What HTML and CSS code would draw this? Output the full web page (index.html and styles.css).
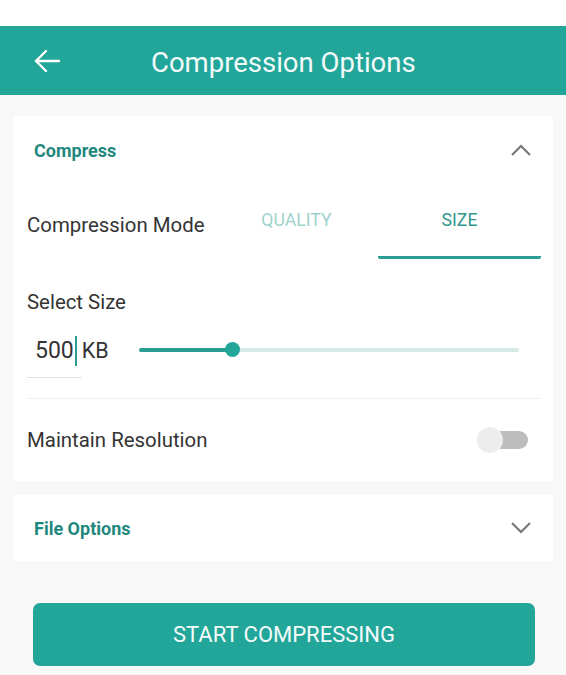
FILE: index.html
```html
<!DOCTYPE html>
<html>
<head>
<meta charset="utf-8">
<link rel="stylesheet" href="styles.css">
</head>
<body>
<div class="status"></div>
<header class="appbar">
  <svg class="back" width="28" height="24" viewBox="0 0 28 24"><path d="M26 12H3M13 2L3 12l10 10" fill="none" stroke="#fff" stroke-width="2.4" stroke-linecap="round" stroke-linejoin="round"/></svg>
  <h1 class="title">Compression Options</h1>
</header>
<main class="content">
  <section class="card">
    <div class="card-head">
      <span class="card-title">Compress</span>
      <svg class="chev" width="22" height="14" viewBox="0 0 22 14"><path d="M2 12L11 3l9 9" fill="none" stroke="#757575" stroke-width="2"/></svg>
    </div>
    <div class="mode-row">
      <span class="label mode-label">Compression Mode</span>
      <div class="tabs">
        <div class="tab">QUALITY</div>
        <div class="tab active">SIZE</div>
      </div>
    </div>
    <div class="label size-label">Select Size</div>
    <div class="size-row">
      <div class="size-input"><span class="num">500</span><span class="caret"></span><span class="unit">KB</span></div>
      <div class="slider">
        <div class="track"><div class="fill" style="width:24.5%"></div></div>
        <div class="thumb" style="left:24.5%"></div>
      </div>
    </div>
    <div class="divider"></div>
    <div class="res-row">
      <span class="label">Maintain Resolution</span>
      <div class="switch"><div class="switch-track"></div><div class="switch-thumb"></div></div>
    </div>
  </section>
  <section class="card card2">
    <div class="card-head">
      <span class="card-title">File Options</span>
      <svg class="chev" width="22" height="14" viewBox="0 0 22 14"><path d="M2 2l9 9 9-9" fill="none" stroke="#757575" stroke-width="2"/></svg>
    </div>
  </section>
  <button class="start">START COMPRESSING</button>
</main>
</body>
</html>
```
FILE: styles.css
```css
html, body { margin: 0; padding: 0; }
body {
  font-family: Roboto, "Liberation Sans", sans-serif;
  background: #f8f8f8;
  width: 566px;
  height: 675px;
  overflow: hidden;
}
.status { height: 26px; background: #fff; }
.appbar {
  height: 69px;
  background: #23a69a;
  display: flex;
  align-items: center;
  padding-left: 33px;
  box-sizing: border-box;
}
.back { display: block; margin-top: 0; }
.title {
  margin: 3px 0 0 90px;
  font-weight: 400;
  font-size: 27.5px;
  color: #f2fbfa;
}
.content { padding: 21px 13px 0 13px; }
.card {
  background: #fff;
  border-radius: 3px;
  padding: 0 12px 0 14px;
}
.card-head {
  height: 68px;
  display: flex;
  align-items: center;
  justify-content: space-between;
  padding: 0 9px 0 7px;
}
.card-title {
  font-weight: 700;
  font-size: 18px;
  color: #1f887e;
}
.chev { display: block; }
.label { font-size: 20.4px; color: #343434; }
.mode-row {
  display: flex;
  align-items: stretch;
  height: 75px;
}
.mode-label { align-self: center; margin-top: 6px; width: 188px; flex: none; white-space: nowrap; }
.tabs { display: flex; flex: 1; }
.tab {
  flex: 1;
  display: flex;
  align-items: flex-start;
  justify-content: center;
  padding-top: 26px;
  box-sizing: border-box;
  font-size: 17.7px;
  color: #9ed3cd;
  border-bottom: 3px solid transparent;
}
.tab.active { color: #2f978d; border-bottom-color: #2a9d92; border-radius: 2px; }
.size-label { margin-top: 31px; line-height: 24px; }
.size-row {
  display: flex;
  align-items: flex-start;
  margin-top: 16px;
}
.size-input {
  width: 55px;
  height: 48px;
  display: flex;
  align-items: center;
  border-bottom: 1px solid #e3e3e3;
  padding: 0 0 6px 8px;
  box-sizing: border-box;
  flex: none;
}
.num { font-size: 23px; color: #333; flex: none; }
.caret { flex: none; width: 2px; height: 30px; background: #2a9d92; margin: 0 5px 0 1px; }
.unit { font-size: 21.5px; color: #333; white-space: nowrap; flex: none; }
.slider {
  position: relative;
  margin: 12px 0 0 57px;
  width: 380px;
  height: 16px;
  flex: none;
}
.track {
  position: absolute;
  left: 0; right: 0; top: 6px;
  height: 4px;
  background: #d5e9e7;
  border-radius: 2px;
}
.fill { height: 100%; background: #2a9d92; border-radius: 2px; }
.thumb {
  position: absolute;
  top: 0;
  width: 15px; height: 15px;
  margin-left: -7px;
  border-radius: 50%;
  background: #23a69a;
}
.divider { height: 1px; background: #efefef; margin-top: 20px; }
.res-row {
  display: flex;
  align-items: center;
  justify-content: space-between;
  height: 82px;
  padding-right: 13px;
}
.switch { position: relative; width: 51px; height: 26px; }
.switch-track {
  position: absolute;
  left: 12px; right: 0; top: 4px;
  height: 18px;
  border-radius: 9px;
  background: #bdbdbd;
}
.switch-thumb {
  position: absolute;
  left: 0; top: 0;
  width: 26px; height: 26px;
  border-radius: 50%;
  background: #ededed;
}
.card2 { margin-top: 14px; }
.card2 .card-head { height: 66px; }
.start {
  display: block;
  margin: 42px 0 0 20px;
  width: 502px;
  height: 63px;
  border: none;
  border-radius: 7px;
  background: #23a69a;
  color: #f4fbfa;
  font-family: Roboto, "Liberation Sans", sans-serif;
  font-size: 22px;
}
```
